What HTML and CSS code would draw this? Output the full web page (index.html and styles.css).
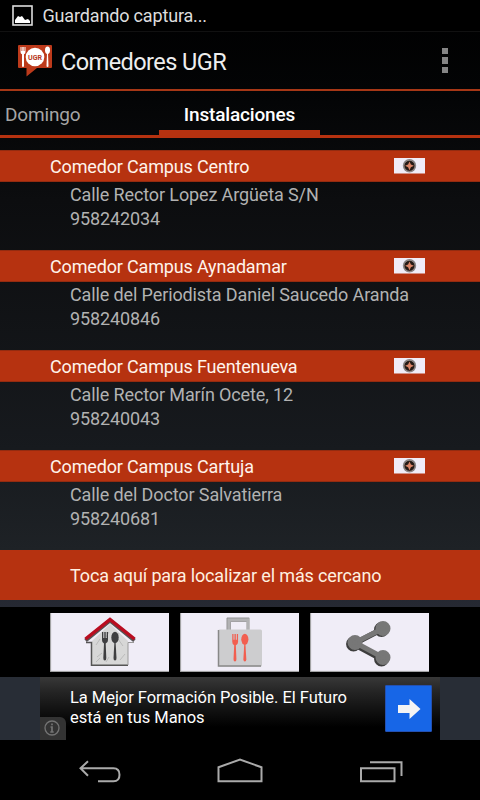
FILE: index.html
```html
<!DOCTYPE html>
<html lang="es">
<head>
  <meta charset="UTF-8" />
  <meta name="viewport" content="width=device-width, initial-scale=1.0"/>
  <title>Comedores UGR</title>
  <link rel="stylesheet" href="styles.css">
</head>
<body>

<!-- shared icons -->
<svg class="defs" width="0" height="0">
  <symbol id="compass" viewBox="0 0 31 16">
    <rect width="31" height="15.500" fill="#f0ecf8"/>
    <circle cx="15.500" cy="7.800" r="6.700" fill="#858082" />
    <circle cx="15.500" cy="7.800" r="5.400" fill="#251916" stroke="#b0a5a2" stroke-width="0.500"/>
    <path d="M15.500 3.400l1.400 3 3 1.400-3 1.400-1.400 3-1.400-3-3-1.400 3-1.400z" fill="#dc8468"/>
  </symbol>
  <symbol id="cutlery" viewBox="0 0 18 32">
    <path d="M1 1v8q0 3 2 3.600L2.300 27q0 2.500 1.500 2.500T5.300 27L4.700 12.600Q7 12 7 9V1H5.700v6H4.700V1H3.300v6H2.300V1z"/>
    <ellipse cx="14" cy="6.500" rx="3.700" ry="5.700"/>
    <path d="M13.400 11h1.200L15.500 27q0 2.500-1.500 2.500T12.500 27z"/>
  </symbol>
</svg>

<div class="status-bar">
  <svg width="21" height="21" viewBox="0 0 21 21">
    <rect x="1" y="1" width="19" height="19" fill="none" stroke="#ddd" stroke-width="1.600"/>
    <path d="M3 18v-3l3-4 2 1 2-1 3 4 3-1 2 2v2z" fill="#fff"/>
  </svg>
  <span>Guardando captura...</span>
</div>

<header>
  <svg class="logo" width="36" height="34" viewBox="0 0 36 34">
    <path d="M2 1h32q1 0 1 1v21q0 1-1 1H20l-10.500 8.500V24H2q-1 0-1-1V2q0-1 1-1z" fill="#bd3a1b"/>
    <circle cx="18" cy="13" r="9.300" fill="#fff"/>
    <path d="M3.500 3v5q0 2 1.500 2.300V22q0 1 1 1t1-1V10.300Q8.500 10 8.500 8V3h-1v4h-.8V3H5.300v4h-.8V3z" fill="#fff"/>
    <ellipse cx="30.500" cy="6.300" rx="2.500" ry="3.700" fill="#fff"/>
    <path d="M30 9h1l.5 13q0 1-1 1t-1-1z" fill="#fff"/>
    <text x="18" y="16" text-anchor="middle" textLength="14" lengthAdjust="spacingAndGlyphs" class="logo-text">UGR</text>
  </svg>
  <h1>Comedores UGR</h1>
  <div class="overflow"><i></i><i></i><i></i></div>
</header>

<nav class="tabs">
  <span class="tab">Domingo</span>
  <span class="tab active">Instalaciones</span>
</nav>

<main>
  <section>
    <h2><span>Comedor Campus Centro</span><svg width="31" height="16"><use href="#compass"/></svg></h2>
    <p>Calle Rector Lopez Argüeta S/N</p>
    <p>958242034</p>
  </section>
  <section>
    <h2><span>Comedor Campus Aynadamar</span><svg width="31" height="16"><use href="#compass"/></svg></h2>
    <p>Calle del Periodista Daniel Saucedo Aranda</p>
    <p>958240846</p>
  </section>
  <section>
    <h2><span>Comedor Campus Fuentenueva</span><svg width="31" height="16"><use href="#compass"/></svg></h2>
    <p>Calle Rector Marín Ocete, 12</p>
    <p>958240043</p>
  </section>
  <section>
    <h2><span>Comedor Campus Cartuja</span><svg width="31" height="16"><use href="#compass"/></svg></h2>
    <p>Calle del Doctor Salvatierra</p>
    <p>958240681</p>
  </section>
  <div class="nearest">Toca aquí para localizar el más cercano</div>
</main>

<div class="actions">
  <button type="button" aria-label="Comedor">
    <svg width="119" height="59" viewBox="0 0 119 59">
      <path d="M42 28v24h36V28L60 11z" fill="#d7d7d7"/>
      <path d="M46 32l4-6m18 0l5 7M47 44l5-4m4 9l3-5m11 3l5-6M56 24l3-5m-13 30l4-4m16-20l3-5" stroke="#bbb" fill="none"/>
      <path d="M36 29.500h5.500V52.300H78" fill="none" stroke="#555" stroke-width="1.500"/>
      <path d="M78 52V29.500h6" fill="none" stroke="#999"/>
      <path d="M35.500 27.500L60 7.500l24.500 20" fill="none" stroke="#555" stroke-width="4"/>
      <path d="M35.500 26L60 6.500 84.500 26" fill="none" stroke="#b90d20" stroke-width="3.500"/>
      <svg x="51" y="18" width="18" height="32" fill="#3e3e40"><use href="#cutlery"/></svg>
    </svg>
  </button>
  <button type="button" aria-label="Para llevar">
    <svg width="119" height="59" viewBox="0 0 119 59">
      <path d="M48.500 17V6.500h19.500V17" fill="none" stroke="#b2b2b4" stroke-width="3.500"/>
      <path d="M50.500 17V8.500h16M47 17V5h22" fill="none" stroke="#888" stroke-width=".7"/>
      <rect x="38" y="16.500" width="44" height="37" rx="1.500" fill="#cdcdcf"/>
      <path d="M38.500 17v36H81" fill="none" stroke="#888" stroke-width="1.500"/>
      <svg x="51" y="20" width="18" height="31" fill="#f25f50"><use href="#cutlery"/></svg>
    </svg>
  </button>
  <button type="button" aria-label="Compartir">
    <svg width="119" height="59" viewBox="0 0 119 59">
      <g fill="#3d3d3d" stroke="#3d3d3d" stroke-width="5.500">
        <path d="M71.500 16.500L43.500 31 71.500 46" fill="none"/>
        <circle cx="71.500" cy="16.500" r="4.700"/><circle cx="43.500" cy="31" r="4.700"/><circle cx="71.500" cy="46" r="4.700"/>
      </g>
      <g fill="#777" stroke="#777" stroke-width="5">
        <path d="M73 15.500L45 29.500 73 44.500" fill="none"/>
        <circle cx="73" cy="15.500" r="5"/><circle cx="45" cy="29.500" r="5"/><circle cx="73" cy="44.500" r="5"/>
      </g>
    </svg>
  </button>
</div>

<div class="ad-row">
  <div class="ad">
    <div class="info">
      <svg width="16" height="16" viewBox="0 0 16 16" fill="none" stroke="#747474">
        <circle cx="8" cy="8" r="7" stroke-width="1.300"/>
        <path d="M8 3.500v1.800M6.500 7H8v5M6.300 12h3.400" stroke-width="1.700"/>
      </svg>
    </div>
    <p>La Mejor Formación Posible. El Futuro<br>está en tus Manos</p>
    <div class="go">
      <svg width="24" height="22" viewBox="0 0 24 22"><path d="M1 7h11.500V1L23.500 11 12.500 21v-6H1z" fill="#f4f4f4"/></svg>
    </div>
  </div>
</div>

<footer>
  <svg width="480" height="60" viewBox="0 0 480 60" fill="none" stroke="#aaa" stroke-width="2">
    <path d="M98 41.300h15.500q6 0 6-6.500t-6-6.500H80.500M88 21.300L80.500 28.300l7.500 7.500"/>
    <path d="M218.500 41.300V27.300L240 19.500l21.500 7.800v14z"/>
    <path d="M361 28.300h33.500v13H361zM370 22.300h31.500V36"/>
  </svg>
</footer>

</body>
</html>
```

FILE: styles.css
```css
* { box-sizing: border-box; margin: 0; padding: 0; }

body {
  width: 480px;
  height: 800px;
  overflow: hidden;
  display: flex;
  flex-direction: column;
  font-family: Roboto, 'Liberation Sans', sans-serif;
  background: linear-gradient(to bottom, #000 0, #030405 90px, #0c0d0f 200px, #171a1e 450px, #1e2226 550px, #262933 607px, #2a2f38 740px);
  color: #fff;
}

svg { display: block; flex: none; }

.defs { position: absolute; }

.status-bar {
  height: 31px;
  padding-left: 12px;
  display: flex;
  align-items: center;
  gap: 9.500px;
  background: #000;
  color: #ddd;
  font-size: 18px;
  letter-spacing: -0.160px;
}

header {
  height: 60px;
  padding: 0 32px 0 17px;
  display: flex;
  align-items: center;
  border-top: 1px solid #111;
  border-bottom: 2px solid #a63716;
}

.logo-text {
  font-size: 7.500px;
  font-weight: 700;
  fill: #b8391d;
}

h1 {
  flex: 1;
  padding: 3px 0 0 8px;
  font-size: 23.500px;
  font-weight: 400;
  letter-spacing: -0.550px;
  color: #eee;
}

.overflow {
  display: flex;
  flex-direction: column;
  gap: 3px;
}

.overflow i {
  width: 6px;
  height: 6.500px;
  background: #858585;
}

.tabs {
  height: 47px;
  display: flex;
  border-bottom: 3px solid #b63210;
  font-size: 19px;
  line-height: 48px;
  letter-spacing: -0.170px;
}

.tab {
  width: 159px;
  padding-left: 5px;
  color: #a5a5a5;
}

.tab.active {
  width: 161px;
  height: 47px;
  padding: 0;
  text-align: center;
  color: #fff;
  font-weight: 500;
  border-bottom: 8px solid #b63210;
}

main {
  height: 469px;
  padding-top: 12px;
}

section { height: 100px; }

h2 {
  height: 32px;
  padding: 0 55px 0 50px;
  margin-bottom: 1px;
  display: flex;
  align-items: center;
  justify-content: space-between;
  background: #b63210;
  border-top: 1px solid #942b10;
  border-bottom: 1px solid #942b10;
  font-size: 18px;
  font-weight: 400;
  letter-spacing: -0.160px;
  color: #fff4ec;
}

section p {
  padding-left: 70px;
  font-size: 18px;
  line-height: 24px;
  letter-spacing: -0.120px;
  color: #b2b2b2;
}

.nearest {
  height: 50px;
  padding-left: 70px;
  background: #b63210;
  color: #fff0e0;
  font-size: 18px;
  line-height: 51px;
  letter-spacing: -0.130px;
}

.actions {
  height: 70px;
  padding: 6px 50px 0;
  display: flex;
  gap: 11px;
  background: #000;
}

.actions button {
  width: 119px;
  height: 59px;
  border: 0;
  background: #f0edf7;
  box-shadow: inset 1px -1px 1px #999;
}

.ad-row {
  height: 63px;
  padding: 0 40px;
  background: #282d36;
}

.ad {
  position: relative;
  height: 63px;
  padding: 8px 8px 0 30px;
  display: flex;
  justify-content: space-between;
  background: linear-gradient(to bottom, #383838 0, #242424 15px, #000 50px);
}

.ad p {
  padding-top: 3px;
  font-size: 16.500px;
  line-height: 20px;
  letter-spacing: -0.040px;
}

.info {
  position: absolute;
  left: 0;
  bottom: 0;
  width: 26px;
  height: 23px;
  padding: 3px 0 0 4px;
  border-top-right-radius: 6px;
  background: #333;
}

.go {
  width: 47px;
  height: 47px;
  display: flex;
  align-items: center;
  justify-content: center;
  background: #1766e7;
  border: 1px solid #2450b0;
  border-radius: 1px;
}

footer {
  height: 60px;
  background: #000;
}
```
